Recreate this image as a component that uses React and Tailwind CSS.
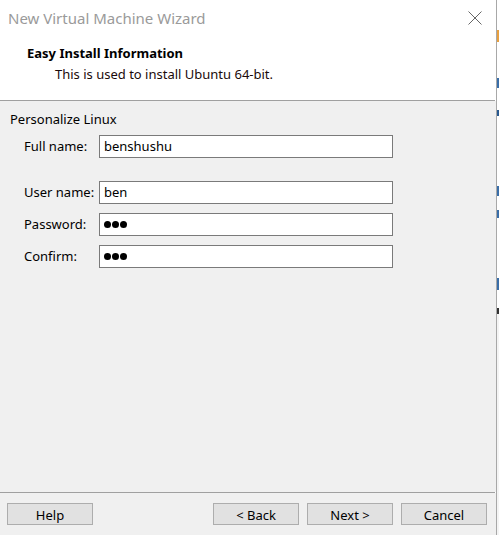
import React from "react";

const font = { fontFamily: '"Segoe UI", "Noto Sans", "Open Sans", sans-serif' };

function Field({ label, value, password, className = "" }) {
  return (
    <div className={`flex items-center h-[23px] ${className}`}>
      <div className="w-[99px] shrink-0 pl-[24px] text-[13px] leading-[17px] text-black whitespace-nowrap">{label}</div>
      <div className="w-[294px] shrink-0 h-[23px] bg-white border border-[#7a7a7a] flex items-center pl-[4px] text-[13px] leading-[17px] text-black">
        {password ? (
          <span className="flex gap-[1px] items-center">
            <span className="w-[7px] h-[7px] rounded-full bg-black" />
            <span className="w-[7px] h-[7px] rounded-full bg-black" />
            <span className="w-[7px] h-[7px] rounded-full bg-black" />
          </span>
        ) : (
          value
        )}
      </div>
    </div>
  );
}

function Btn({ children, className = "" }) {
  return (
    <div className={`w-[86px] h-[22px] bg-[#e1e1e1] border border-[#adadad] flex items-center justify-center text-[13px] leading-[17px] pt-[2px] text-black ${className}`}>
      {children}
    </div>
  );
}

export default function App() {
  return (
    <div className="flex w-[499px] h-[535px] overflow-hidden" style={font}>
      <div className="w-[497px] h-[535px] flex flex-col border-r border-[#a8a8a8]">
        <div className="h-[100px] bg-white flex flex-col">
          <div className="h-[37px] flex items-start justify-between">
            <div className="pl-[8px] pt-[8px] text-[15px] leading-[20px] text-[#9a9a9a]">New Virtual Machine Wizard</div>
            <svg className="mt-[11px] mr-[14px]" width="14" height="14" viewBox="0 0 14 14">
              <path d="M0.5 0.5 L13.5 13.5 M13.5 0.5 L0.5 13.5" stroke="#666" strokeWidth="1" fill="none" />
            </svg>
          </div>
          <div className="pl-[27px] mt-[8px] text-[13px] leading-[17px] font-bold text-black">Easy Install Information</div>
          <div className="pl-[55px] mt-[4px] text-[13px] leading-[17px] text-[#1a0a0a]">This is used to install Ubuntu 64-bit.</div>
        </div>
        <div className="h-[1px] bg-[#a0a0a0] mr-[1px]" />
        <div className="flex-1 bg-[#f0f0f0] flex flex-col">
          <div className="pl-[10px] pt-[10px] text-[13px] leading-[17px] text-black">Personalize Linux</div>
          <Field label="Full name:" value="benshushu" className="mt-[7px]" />
          <Field label="User name:" value="ben" className="mt-[23px]" />
          <Field label="Password:" password className="mt-[9px]" />
          <Field label="Confirm:" password className="mt-[9px]" />
        </div>
        <div className="h-[1px] bg-[#a0a0a0] mr-[1px]" />
        <div className="h-[42px] bg-[#f0f0f0] flex items-start pt-[10px]">
          <Btn className="ml-[7px]">Help</Btn>
          <Btn className="ml-[120px]">&lt; Back</Btn>
          <Btn className="ml-[8px]">Next &gt;</Btn>
          <Btn className="ml-[8px]">Cancel</Btn>
        </div>
      </div>
      <div className="w-[2px] h-[535px] flex flex-col bg-[#f4f4f4]">
        <div className="h-[30px] bg-white" />
        <div className="h-[12px] bg-[#e8a040]" />
        <div className="h-[36px] bg-white" />
        <div className="h-[10px] bg-[#3a6ea8]" />
        <div className="h-[22px] bg-white" />
        <div className="h-[6px] bg-[#2a5a90]" />
        <div className="h-[70px] bg-white" />
        <div className="h-[10px] bg-[#3a6ea8]" />
        <div className="h-[14px] bg-white" />
        <div className="h-[8px] bg-[#3a6ea8]" />
        <div className="h-[60px] bg-white" />
        <div className="h-[12px] bg-[#3a6ea8]" />
        <div className="h-[18px] bg-white" />
        <div className="h-[6px] bg-[#333]" />
      </div>
    </div>
  );
}
